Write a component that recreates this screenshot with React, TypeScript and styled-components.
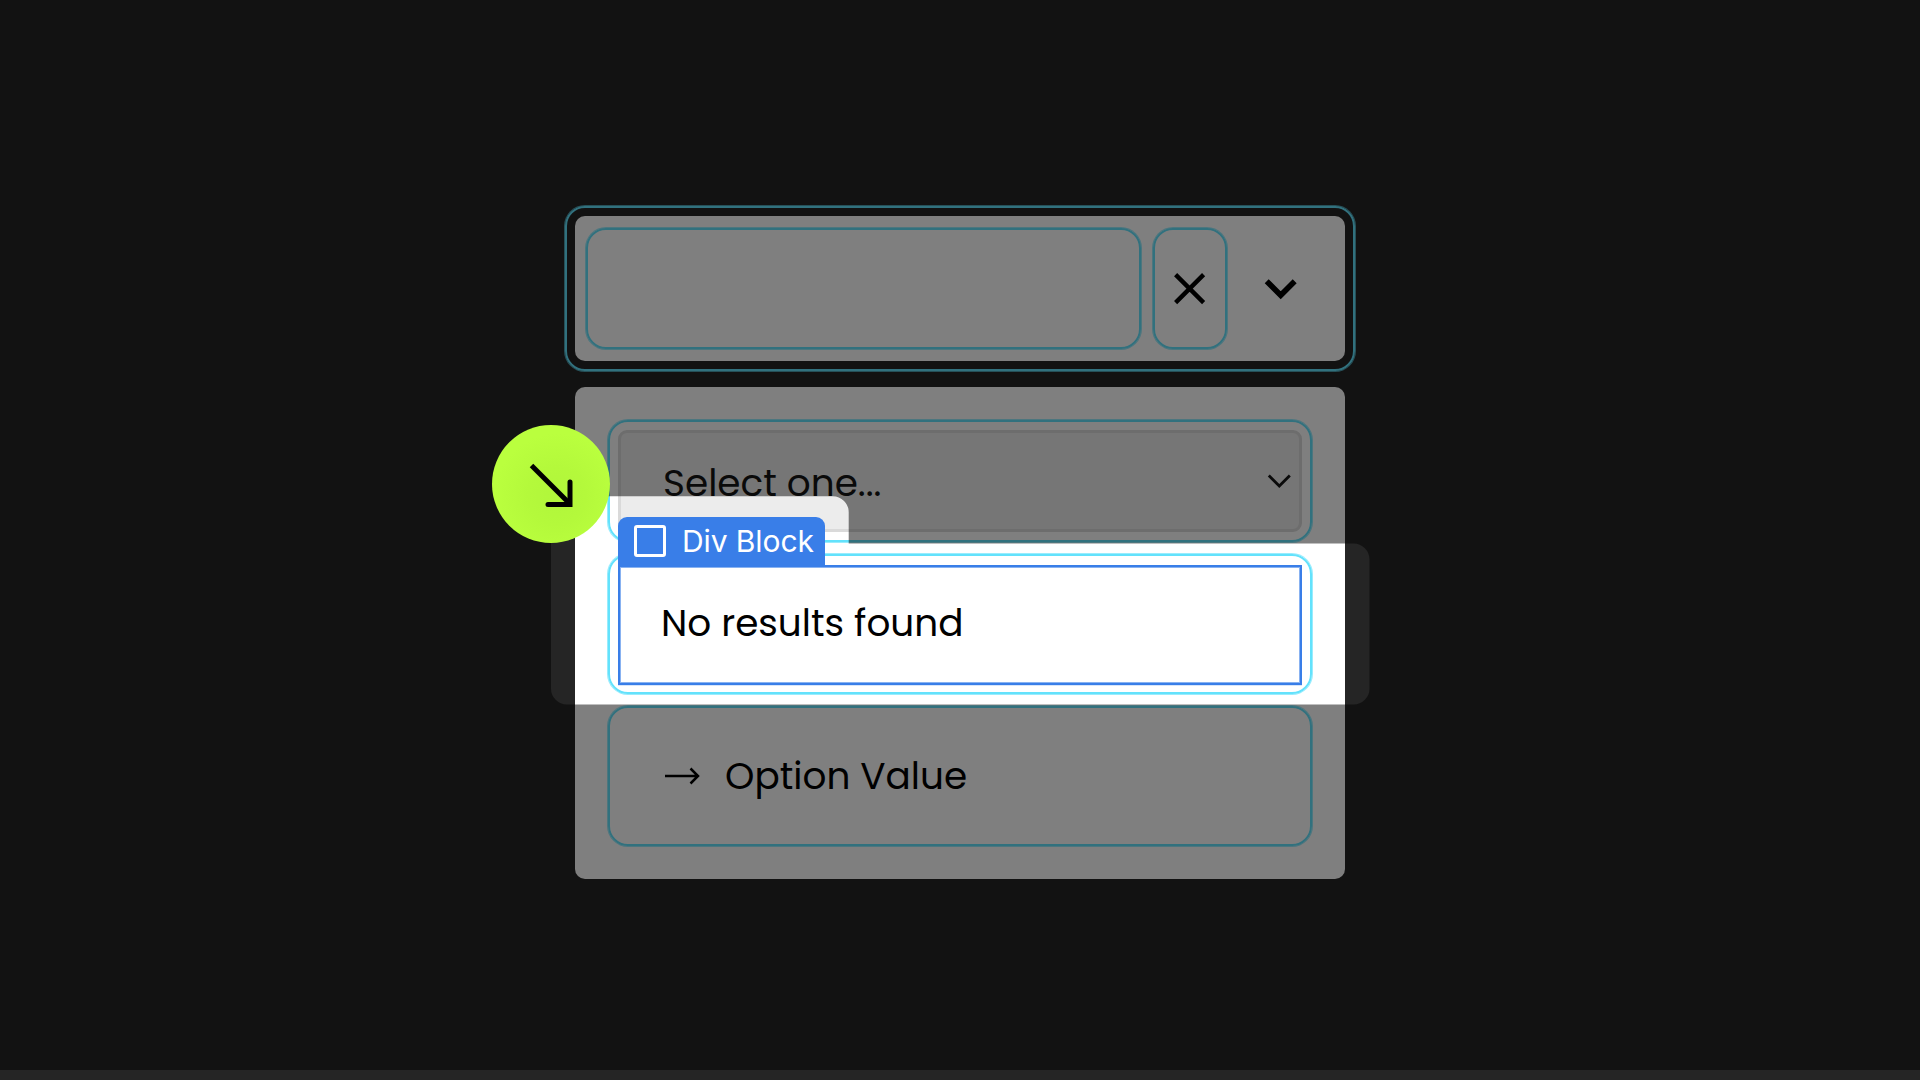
import styled, { createGlobalStyle } from 'styled-components';

const GlobalStyle = createGlobalStyle`
  * {
    box-sizing: border-box;
  }
  body {
    margin: 0;
    background-color: #252525;
  }
`;

const Page = styled.main`
  position: relative;
  display: flex;
  flex-direction: column;
  align-items: center;
  width: 1920px;
  height: 1080px;
  padding-top: 206px;
  overflow: hidden;
  background-color: #252525;
  color: #000;
  font-family: Poppins, Inter, 'Open Sans', sans-serif;

  svg {
    display: block;
    fill: none;
    stroke: currentColor;
  }
`;

const Outline = styled.div`
  border: 2px solid #63e2fc;
  box-shadow: 0 0 0 1px #63e2fca6;
  border-radius: 20px;
`;

const Picker = styled(Outline)`
  width: 790px;
  height: 165px;
  padding: 8px;
`;

const Panel = styled.div`
  background-color: #fff;
  border-radius: 10px;
`;

const SearchBar = styled(Panel)`
  display: flex;
  gap: 12px;
  height: 145px;
  padding: 12px 11px;
`;

const SearchInput = styled(Outline)`
  width: 555px;
`;

const ClearButton = styled(Outline)`
  display: flex;
  align-items: center;
  justify-content: center;
  width: 74px;
`;

const Toggle = styled.div`
  display: flex;
  align-items: center;
  margin-left: 25px;
`;

const Dropdown = styled(Panel)`
  display: flex;
  flex-direction: column;
  width: 770px;
  height: 492px;
  margin-top: 16px;
  padding: 33px;
`;

const SelectWrap = styled(Outline)`
  height: 122px;
  padding: 8px;
`;

const Select = styled.div`
  display: flex;
  align-items: center;
  justify-content: space-between;
  height: 102px;
  padding: 0 8px 0 42px;
  border: 3px solid #dadada;
  border-radius: 9px;
  background-color: #ececec;
  color: #141414;
`;

const EmptyWrap = styled(Outline)`
  height: 140px;
  margin-top: 12px;
  padding: 9px 8px 7px;
`;

const EmptyState = styled.div`
  position: relative;
  display: flex;
  align-items: center;
  height: 120px;
  padding-left: 41px;
  border: 2px solid #397ee8;
  box-shadow: inset 0 0 0 1px #397ee899, 0 1px 0 #397ee833;
`;

const OptionRow = styled(Outline)`
  display: flex;
  align-items: center;
  gap: 25px;
  height: 141px;
  margin-top: 12px;
  padding-left: 54px;
`;

const Label = styled.span<{ $top?: number; $bottom?: number }>`
  padding-top: ${({ $top = 0 }) => $top}px;
  padding-bottom: ${({ $bottom = 0 }) => $bottom}px;
  font-size: 37.4px;
  line-height: 44px;
  white-space: nowrap;
`;

const Tag = styled.div`
  position: absolute;
  top: -50px;
  left: -2px;
  display: flex;
  align-items: center;
  gap: 16px;
  width: 207px;
  height: 50px;
  padding: 0 0 2px 16px;
  border-radius: 9px 9px 0 0;
  background-color: #397ee8;
  color: #fff;
  font-family: Inter, sans-serif;
  font-size: 30px;
  line-height: 36px;
  letter-spacing: -0.1px;
  white-space: nowrap;
`;

const TagBox = styled.i`
  width: 32px;
  height: 32px;
  border: 3px solid #fff;
  border-radius: 3px;
`;

// Dims the canvas everywhere but around the selected block and its tag
const Dimmer = styled.div`
  position: absolute;
  top: 0;
  left: 0;
  width: 1920px;
  height: 1070px;
  background-color: rgba(0, 0, 0, 0.5);
  clip-path: path(
    evenodd,
    'M0 0H1920V1070H0Z M551 496.3H832.7A16 16 0 0 1 848.7 512.3V543.5H1353.5A16 16 0 0 1 1369.5 559.5V688.5A16 16 0 0 1 1353.5 704.5H567A16 16 0 0 1 551 688.5Z'
  );
`;

const Pointer = styled.div`
  position: absolute;
  top: 425px;
  left: 492px;
  width: 118px;
  height: 118px;
  border-radius: 50%;
  background: radial-gradient(circle at 55% 60%, #b1f63b 0%, #b4f93b 30%, #baff3e 65%);
`;

const App = () => {
  return (
    <Page>
      <GlobalStyle />
      <Picker>
        <SearchBar>
          <SearchInput />
          <ClearButton>
            <svg width="32" height="32" strokeWidth="4.4">
              <path d="M1.6 1.6 29.6 29.6M29.6 1.6 1.6 29.6" />
            </svg>
          </ClearButton>
          <Toggle>
            <svg width="34" height="24" strokeWidth="5.6">
              <path d="M2.7 4.2 16.7 18.2 30.7 4.2" />
            </svg>
          </Toggle>
        </SearchBar>
      </Picker>
      <Dropdown>
        <SelectWrap>
          <Select>
            <Label $top={4}>Select one...</Label>
            <svg width="24" height="14" strokeWidth="2.8">
              <path d="M1.8 1.5 12.3 12 22.8 1.5" />
            </svg>
          </Select>
        </SelectWrap>
        <EmptyWrap>
          <EmptyState>
            <Tag>
              <TagBox />
              Div Block
            </Tag>
            <Label $bottom={5}>No results found</Label>
          </EmptyState>
        </EmptyWrap>
        <OptionRow>
          <svg width="36" height="18" strokeWidth="2.5">
            <path d="M1 9H34M26.5 1.5 34 9 26.5 16.5" />
          </svg>
          <Label $bottom={1}>Option Value</Label>
        </OptionRow>
      </Dropdown>
      <Dimmer />
      <Pointer>
        <svg width="118" height="118" strokeWidth="5">
          <path d="M39.5 40.5 78 79" />
          <path d="M56 79.5H78V57" strokeLinecap="round" />
        </svg>
      </Pointer>
    </Page>
  );
};

export default App;
